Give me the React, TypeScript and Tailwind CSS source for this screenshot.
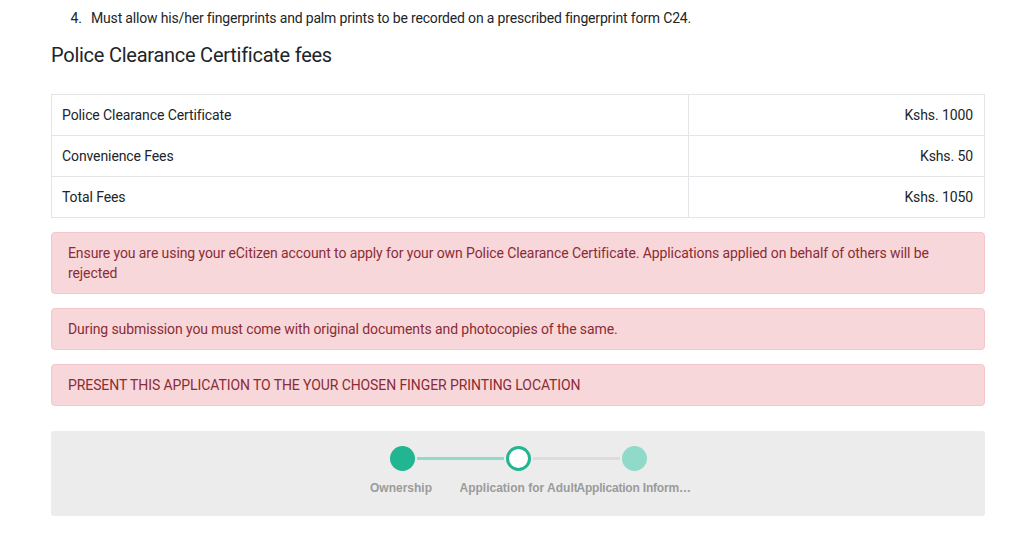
import React from "react";

export default function App() {
  const font = { fontFamily: '"Roboto", "Liberation Sans", Arial, sans-serif' };
  const labelFont = { fontFamily: '"Liberation Sans", Arial, sans-serif' };
  return (
    <div className="w-[1024px] h-[547px] bg-white overflow-hidden text-[#212529]" style={font}>
      <div className="ml-[51px] w-[934px]">
        <ol className="list-decimal pl-[34px] pt-[8px] text-[14px] leading-[20px] tracking-[-0.17px]" start={4}>
          <li className="pl-[6px]">Must allow his/her fingerprints and palm prints to be recorded on a prescribed fingerprint form C24.</li>
        </ol>
        <h2 className="mt-[15px] text-[20px] leading-[24px] font-normal tracking-[-0.25px]">Police Clearance Certificate fees</h2>
        <table className="mt-[27px] w-full border-collapse text-[14px] leading-[20px] tracking-[-0.1px]">
          <tbody>
            {[
              ["Police Clearance Certificate", "Kshs. 1000"],
              ["Convenience Fees", "Kshs. 50"],
              ["Total Fees", "Kshs. 1050"],
            ].map(([a, b]) => (
              <tr key={a} className="h-[41px]">
                <td className="border border-[#e3e5e8] pl-[10px] pr-[11px] py-0 w-[637px]">{a}</td>
                <td className="border border-[#e3e5e8] px-[11px] py-0 text-right">{b}</td>
              </tr>
            ))}
          </tbody>
        </table>
        <div className="mt-[14px] flex flex-col gap-[14px] text-[14px] leading-[20px] tracking-[-0.09px] text-[#8a2c35]">
          <div className="bg-[#f8d7da] border border-[#f5c6cb] rounded-[4px] px-[16px] py-[10px]">
            Ensure you are using your eCitizen account to apply for your own Police Clearance Certificate. Applications applied on behalf of others will be rejected
          </div>
          <div className="bg-[#f8d7da] border border-[#f5c6cb] rounded-[4px] px-[16px] py-[10px]">
            During submission you must come with original documents and photocopies of the same.
          </div>
          <div className="bg-[#f8d7da] border border-[#f5c6cb] rounded-[4px] px-[16px] py-[10px]">
            PRESENT THIS APPLICATION TO THE YOUR CHOSEN FINGER PRINTING LOCATION
          </div>
        </div>
        <div className="mt-[25px] h-[85px] bg-[#ececec] rounded-[3px] pt-[15px] flex flex-col items-center">
          <div className="flex items-center">
            <div className="w-[25px] h-[25px] rounded-full bg-[#22b592]" />
            <div className="w-[87px] h-[3px] mx-[2px] bg-[#8fdac8]" />
            <div className="w-[25px] h-[25px] rounded-full bg-white border-[3px] border-[#22b592]" />
            <div className="w-[87px] h-[3px] mx-[2px] bg-[#dcdcdc]" />
            <div className="w-[25px] h-[25px] rounded-full bg-[#8fdac8]" />
          </div>
          <div className="flex mt-[9px] text-[12px] leading-[16px] font-bold text-[#9b9b9b]" style={labelFont}>
            <div className="w-[117px] text-center truncate">Ownership</div>
            <div className="w-[117px] text-center whitespace-nowrap overflow-hidden">Application for Adult</div>
            <div className="w-[117px] text-center truncate tracking-[-0.2px]">Application Information</div>
          </div>
        </div>
      </div>
    </div>
  );
}
